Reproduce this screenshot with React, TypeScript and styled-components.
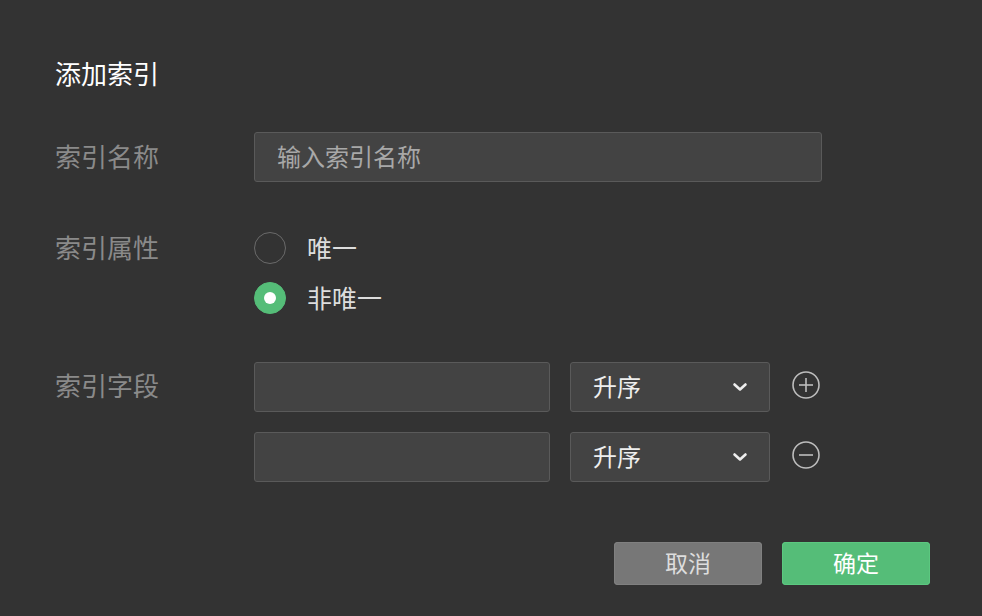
import styled, { createGlobalStyle } from 'styled-components';

const GlobalStyle = createGlobalStyle`
  html, body {
    margin: 0;
    padding: 0;
    background: #333333;
  }
  body {
    font-family: "Noto Sans CJK SC", "Noto Sans", sans-serif;
  }
`;

const fields = [
  { order: '升序', action: 'add' },
  { order: '升序', action: 'remove' },
];

function ChevronDown() {
  return (
    <svg width="18" height="18" viewBox="0 0 18 18" fill="none">
      <path d="M3.5 6.5l5.5 5 5.5-5" stroke="#eeeeee" strokeWidth="2.6" strokeLinecap="round" strokeLinejoin="round" />
    </svg>
  );
}

function CircleAction({ type }: { type: string }) {
  return (
    <svg width="30" height="30" viewBox="0 0 30 30" fill="none">
      <circle cx="15" cy="15" r="13" stroke="#bdbdbd" strokeWidth="1.6" />
      <path d="M8 15h14" stroke="#bdbdbd" strokeWidth="1.6" />
      {type === 'add' && <path d="M15 8v14" stroke="#bdbdbd" strokeWidth="1.6" />}
    </svg>
  );
}

export default function App() {
  return (
    <>
      <GlobalStyle />
      <Dialog>
        <Title>添加索引</Title>

        <FormRow $align="center">
          <Label>索引名称</Label>
          <TextInput placeholder="输入索引名称" />
        </FormRow>

        <FormRow $gap={50}>
          <Label $lineHeight={30}>索引属性</Label>
          <RadioGroup>
            <RadioItem>
              <RadioCircle />
              <RadioText>唯一</RadioText>
            </RadioItem>
            <RadioItem>
              <RadioCircle $checked />
              <RadioText>非唯一</RadioText>
            </RadioItem>
          </RadioGroup>
        </FormRow>

        <FormRow $gap={48}>
          <Label $lineHeight={46}>索引字段</Label>
          <FieldList>
            {fields.map((f, i) => (
              <FieldRow key={i}>
                <FieldInput />
                <Select>
                  <SelectValue>{f.order}</SelectValue>
                  <ChevronDown />
                </Select>
                <IconButton>
                  <CircleAction type={f.action} />
                </IconButton>
              </FieldRow>
            ))}
          </FieldList>
        </FormRow>

        <Footer>
          <Button>取消</Button>
          <Button $primary>确定</Button>
        </Footer>
      </Dialog>
    </>
  );
}

const Dialog = styled.div`
  width: 982px;
  height: 616px;
  box-sizing: border-box;
  padding: 58px 52px 0 55px;
  background: #333333;
  display: flex;
  flex-direction: column;
`;

const Title = styled.div`
  font-size: 26px;
  line-height: 30px;
  color: #ffffff;
  margin-bottom: 2px;
`;

const FormRow = styled.div<{ $align?: string; $gap?: number }>`
  display: grid;
  grid-template-columns: 199px 1fr;
  align-items: ${(p) => p.$align || 'start'};
  margin-top: ${(p) => p.$gap ?? 42}px;
`;

const Label = styled.div<{ $lineHeight?: number }>`
  font-size: 26px;
  line-height: ${(p) => p.$lineHeight ?? 30}px;
  color: #8a8a8a;
  padding-bottom: 3px;
`;

const TextInput = styled.input`
  width: 568px;
  height: 50px;
  box-sizing: border-box;
  background: #434343;
  border: 1px solid #5a5a5a;
  border-radius: 3px;
  padding: 0 22px 3px;
  font-family: inherit;
  font-size: 24px;
  color: #dddddd;
  outline: none;

  &::placeholder {
    color: #a8a8a8;
  }
`;

const RadioGroup = styled.div`
  display: flex;
  flex-direction: column;
  gap: 18px;
`;

const RadioItem = styled.label`
  display: flex;
  align-items: center;
  gap: 21px;
  height: 32px;
`;

const RadioCircle = styled.span<{ $checked?: boolean }>`
  width: 32px;
  height: 32px;
  box-sizing: border-box;
  border-radius: 50%;
  border: 1px solid ${(p) => (p.$checked ? '#55bd78' : '#6a6a6a')};
  background: ${(p) => (p.$checked ? '#55bd78' : 'transparent')};
  display: flex;
  align-items: center;
  justify-content: center;

  &::after {
    content: '';
    display: ${(p) => (p.$checked ? 'block' : 'none')};
    width: 12px;
    height: 12px;
    border-radius: 50%;
    background: #ffffff;
  }
`;

const RadioText = styled.span`
  font-size: 25px;
  color: #dddddd;
  padding-bottom: 2px;
`;

const FieldList = styled.div`
  display: flex;
  flex-direction: column;
  gap: 20px;
`;

const FieldRow = styled.div`
  display: flex;
  align-items: center;
  gap: 20px;
`;

const FieldInput = styled.input`
  width: 296px;
  height: 50px;
  box-sizing: border-box;
  background: #434343;
  border: 1px solid #5a5a5a;
  border-radius: 3px;
  outline: none;
`;

const Select = styled.div`
  width: 200px;
  height: 50px;
  box-sizing: border-box;
  background: #434343;
  border: 1px solid #5a5a5a;
  border-radius: 3px;
  padding: 0 20px 0 22px;
  display: flex;
  align-items: center;
  justify-content: space-between;
  font-size: 24px;
  color: #eeeeee;
`;

const SelectValue = styled.span`
  padding-bottom: 3px;
`;

const IconButton = styled.span`
  display: flex;
  margin-left: 1px;
  margin-top: -4px;
`;

const Footer = styled.div`
  display: flex;
  justify-content: flex-end;
  gap: 20px;
  margin-top: 60px;
`;

const Button = styled.button<{ $primary?: boolean }>`
  width: 148px;
  height: 43px;
  border: none;
  border-radius: 4px;
  padding: 0 0 4px;
  font-family: inherit;
  font-size: 23px;
  color: ${(p) => (p.$primary ? '#ffffff' : '#dddddd')};
  background: ${(p) => (p.$primary ? '#55bd78' : '#777777')};
  box-shadow: inset 0 0 0 1px ${(p) => (p.$primary ? '#5cc880' : '#808080')};
  cursor: pointer;
`;
